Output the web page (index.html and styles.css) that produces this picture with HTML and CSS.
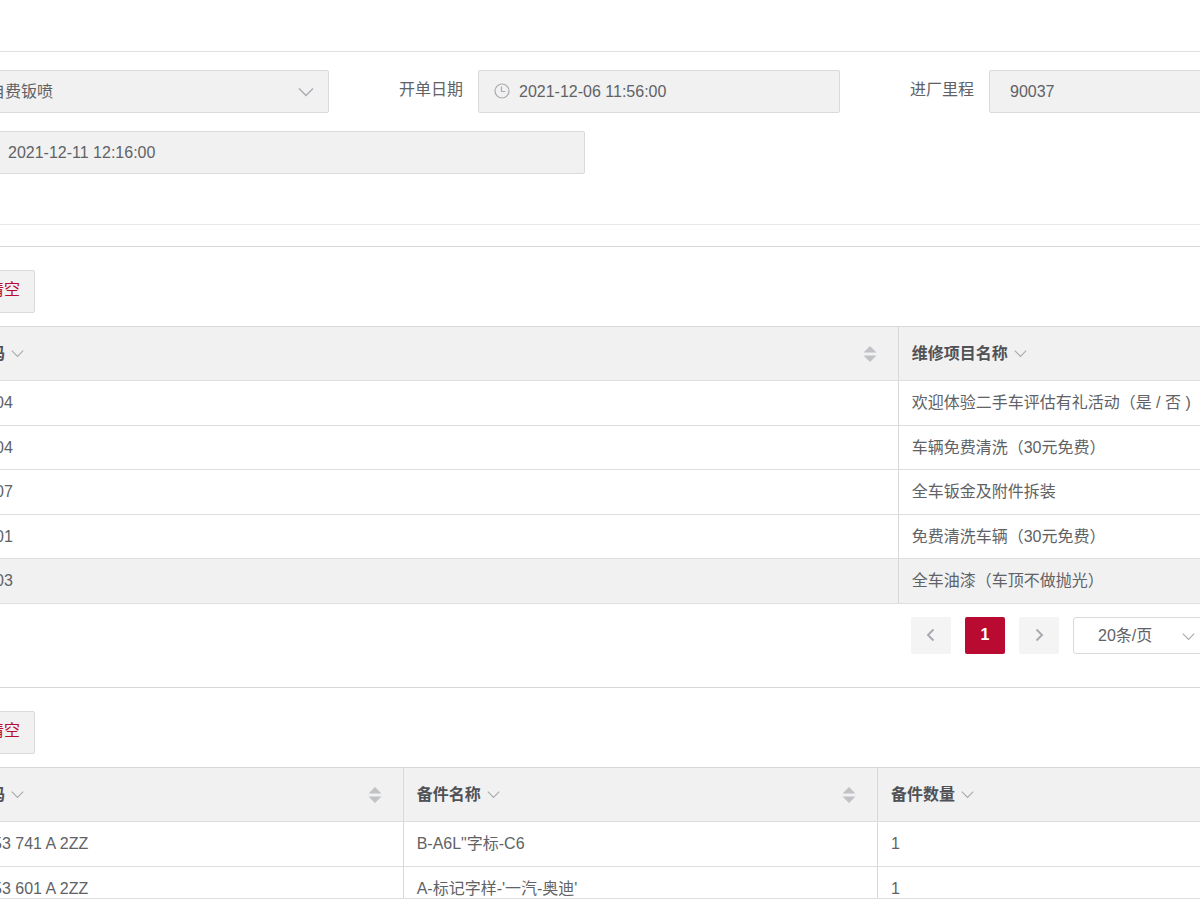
FILE: index.html
```html
<!DOCTYPE html>
<html lang="zh-CN">
<head>
<meta charset="utf-8">
<title>维修工单</title>
<link rel="stylesheet" href="styles.css">
</head>
<body>
<svg class="sprite" aria-hidden="true">
  <symbol id="down" viewBox="0 0 16 16"><path d="M1 4.500 8 11.500 15 4.500" fill="none" stroke="currentColor" stroke-width="1.400"/></symbol>
  <symbol id="sort" viewBox="0 0 14 18"><path d="M7 1 13.500 7.500H.5zM7 17 .5 10.500H13.500z" fill="currentColor"/></symbol>
  <symbol id="clock" viewBox="0 0 16 16"><g fill="none" stroke="currentColor" stroke-width="1.200"><circle cx="8" cy="8" r="7"/><path d="M7.500 3.500V8.500H11.500"/></g></symbol>
  <symbol id="prev" viewBox="0 0 16 16"><path d="M10.500 2.500 5 8l5.500 5.500" fill="none" stroke="currentColor" stroke-width="2"/></symbol>
  <symbol id="next" viewBox="0 0 16 16"><path d="M5.500 2.500 11 8l-5.500 5.500" fill="none" stroke="currentColor" stroke-width="2"/></symbol>
</svg>
<main class="page">
  <form class="order-form">
    <div class="form-row">
      <div class="control">
        <select class="field field-type" aria-label="维修类型" disabled><option>自费钣喷</option></select>
        <svg class="icon field-arrow"><use href="#down"/></svg>
      </div>
      <div class="item">
        <label for="open-date">开单日期</label>
        <div class="control">
          <svg class="icon field-clock"><use href="#clock"/></svg>
          <input class="field field-date" id="open-date" value="2021-12-06 11:56:00" disabled>
        </div>
      </div>
      <div class="item">
        <label for="mileage">进厂里程</label>
        <div class="control"><input class="field" id="mileage" value="90037" disabled></div>
      </div>
    </div>
    <div class="form-row form-row-second">
      <input class="field field-finish" aria-label="预计完工时间" value="2021-12-11 12:16:00" disabled>
    </div>
  </form>

  <section class="panel">
    <button class="clear" type="button">清空</button>
    <div class="table-wrap">
      <table class="grid projects">
        <colgroup><col class="col-code"><col></colgroup>
        <thead><tr>
          <th><div class="head"><span>码</span><svg class="icon filter"><use href="#down"/></svg><svg class="sort"><use href="#sort"/></svg></div></th>
          <th><div class="head"><span>维修项目名称</span><svg class="icon filter"><use href="#down"/></svg></div></th>
        </tr></thead>
        <tbody>
          <tr><td>04</td><td>欢迎体验二手车评估有礼活动（是 / 否 )</td></tr>
          <tr><td>04</td><td>车辆免费清洗（30元免费）</td></tr>
          <tr><td>07</td><td>全车钣金及附件拆装</td></tr>
          <tr><td>01</td><td>免费清洗车辆（30元免费）</td></tr>
          <tr class="active"><td>03</td><td>全车油漆（车顶不做抛光）</td></tr>
        </tbody>
      </table>
    </div>
    <nav class="pagination" aria-label="分页">
      <button class="page-button" type="button" aria-label="上一页"><svg class="icon"><use href="#prev"/></svg></button>
      <button class="page-button current" type="button">1</button>
      <button class="page-button" type="button" aria-label="下一页"><svg class="icon"><use href="#next"/></svg></button>
      <div class="page-size">
        <select aria-label="每页条数"><option>20条/页</option></select>
        <svg class="icon size-arrow"><use href="#down"/></svg>
      </div>
    </nav>
  </section>

  <section class="panel panel-parts">
    <button class="clear" type="button">清空</button>
    <div class="table-wrap parts-wrap">
      <table class="grid parts">
        <colgroup><col class="col-part"><col class="col-name"><col></colgroup>
        <thead><tr>
          <th><div class="head"><span>码</span><svg class="icon filter"><use href="#down"/></svg><svg class="sort"><use href="#sort"/></svg></div></th>
          <th><div class="head"><span>备件名称</span><svg class="icon filter"><use href="#down"/></svg><svg class="sort"><use href="#sort"/></svg></div></th>
          <th><div class="head"><span>备件数量</span><svg class="icon filter"><use href="#down"/></svg></div></th>
        </tr></thead>
        <tbody>
          <tr><td>53 741 A 2ZZ</td><td>B-A6L"字标-C6</td><td>1</td></tr>
          <tr><td>53 601 A 2ZZ</td><td>A-标记字样-'一汽-奥迪'</td><td>1</td></tr>
        </tbody>
      </table>
    </div>
  </section>
</main>
</body>
</html>
```
FILE: styles.css
```css
* { box-sizing: border-box; }

body {
  margin: 0;
  overflow: hidden;
  background: #fff;
  color: #606266;
  font: 16px/24px "Liberation Sans", "Noto Sans CJK SC", sans-serif;
}

button, input, select { font: inherit; color: inherit; }

.sprite { display: none; }
.icon { display: block; width: 16px; height: 16px; flex: none; color: #a8abb0; }

/* The workspace is wider than the window on both sides. */
.page { margin: 0 -151px 0 -24px; padding-top: 51px; }

.order-form {
  border-top: 1px solid #e0e0e0;
  border-bottom: 1px solid #e8e8e8;
  padding: 18px 0 50px;
}

.form-row { display: grid; grid-template-columns: 353fr 511fr 511fr; }
.form-row-second { grid-template-columns: 609fr 766fr; margin-top: 18px; }

.item { display: flex; padding-left: 70px; }
.item label { flex: none; width: 79px; padding-top: 8px; }
.control { position: relative; flex: 1; }

.field {
  display: block;
  width: 100%;
  height: 43px;
  padding: 0 20px;
  border: 1px solid #dadada;
  border-radius: 2px;
  background: #f1f1f1;
  color: #606266;
  opacity: 1;
  appearance: none;
}
.field-type { padding-left: 12px; }
.field-date { padding-left: 40px; }
.field-finish { padding-left: 31px; }
.field-arrow { position: absolute; right: 15px; top: 14px; }
.field-clock { position: absolute; left: 16px; top: 13px; }

.panel { margin-top: 21px; padding-top: 23px; border-top: 1px solid #d8d8d8; }
.panel-parts { margin-top: 20px; }

.clear {
  display: block;
  height: 43px;
  padding: 0 14px 4px 11px;
  border: 1px solid #dadada;
  border-radius: 2px;
  background: #f1f1f1;
  color: #b90b31;
}

.table-wrap { margin-top: 13px; border-top: 1px solid #d8d8d8; }
.parts-wrap { height: 132px; overflow: hidden; border-bottom: 1px solid #dedede; }

.grid { width: 100%; table-layout: fixed; border-collapse: separate; border-spacing: 0; }
.col-code { width: 67.1%; }
.col-part { width: 31.1%; }
.col-name { width: 34.5%; }

.grid th, .grid td {
  height: 44px;
  padding: 0 13px;
  border-right: 1px solid #d8d8d8;
  border-bottom: 1px solid #dedede;
  text-align: left;
  white-space: nowrap;
}
.grid tbody tr:nth-child(odd) td { height: 45px; }
.grid th { height: 54px; background: #f1f1f1; color: #505256; font-weight: 700; }
.grid th:first-child { padding-left: 13px; }
.projects td:first-child { padding-left: 19px; }
.parts td:first-child { padding-left: 17px; }
.grid .active td { background: #f1f1f1; }

.head { display: flex; align-items: center; gap: 6px; }
.filter { width: 13px; height: 13px; }
.sort { width: 14px; height: 18px; margin-left: auto; margin-right: 8px; color: #c0c2c6; }

.pagination { display: flex; justify-content: flex-end; gap: 14px; padding: 13px 148px 13px 0; }
.page-button {
  display: flex;
  align-items: center;
  justify-content: center;
  width: 40px;
  height: 37px;
  padding: 0 0 2px;
  border: 0;
  border-radius: 2px;
  background: #f4f4f4;
}
.current { background: #b90b31; color: #fff; font-weight: 700; }
.page-size { position: relative; width: 130px; }
.page-size select {
  width: 100%;
  height: 37px;
  padding: 0 24px;
  border: 1px solid #dadada;
  border-radius: 3px;
  background: #fff;
  appearance: none;
}
.size-arrow { position: absolute; right: 8px; top: 13px; width: 13px; height: 13px; }
```
